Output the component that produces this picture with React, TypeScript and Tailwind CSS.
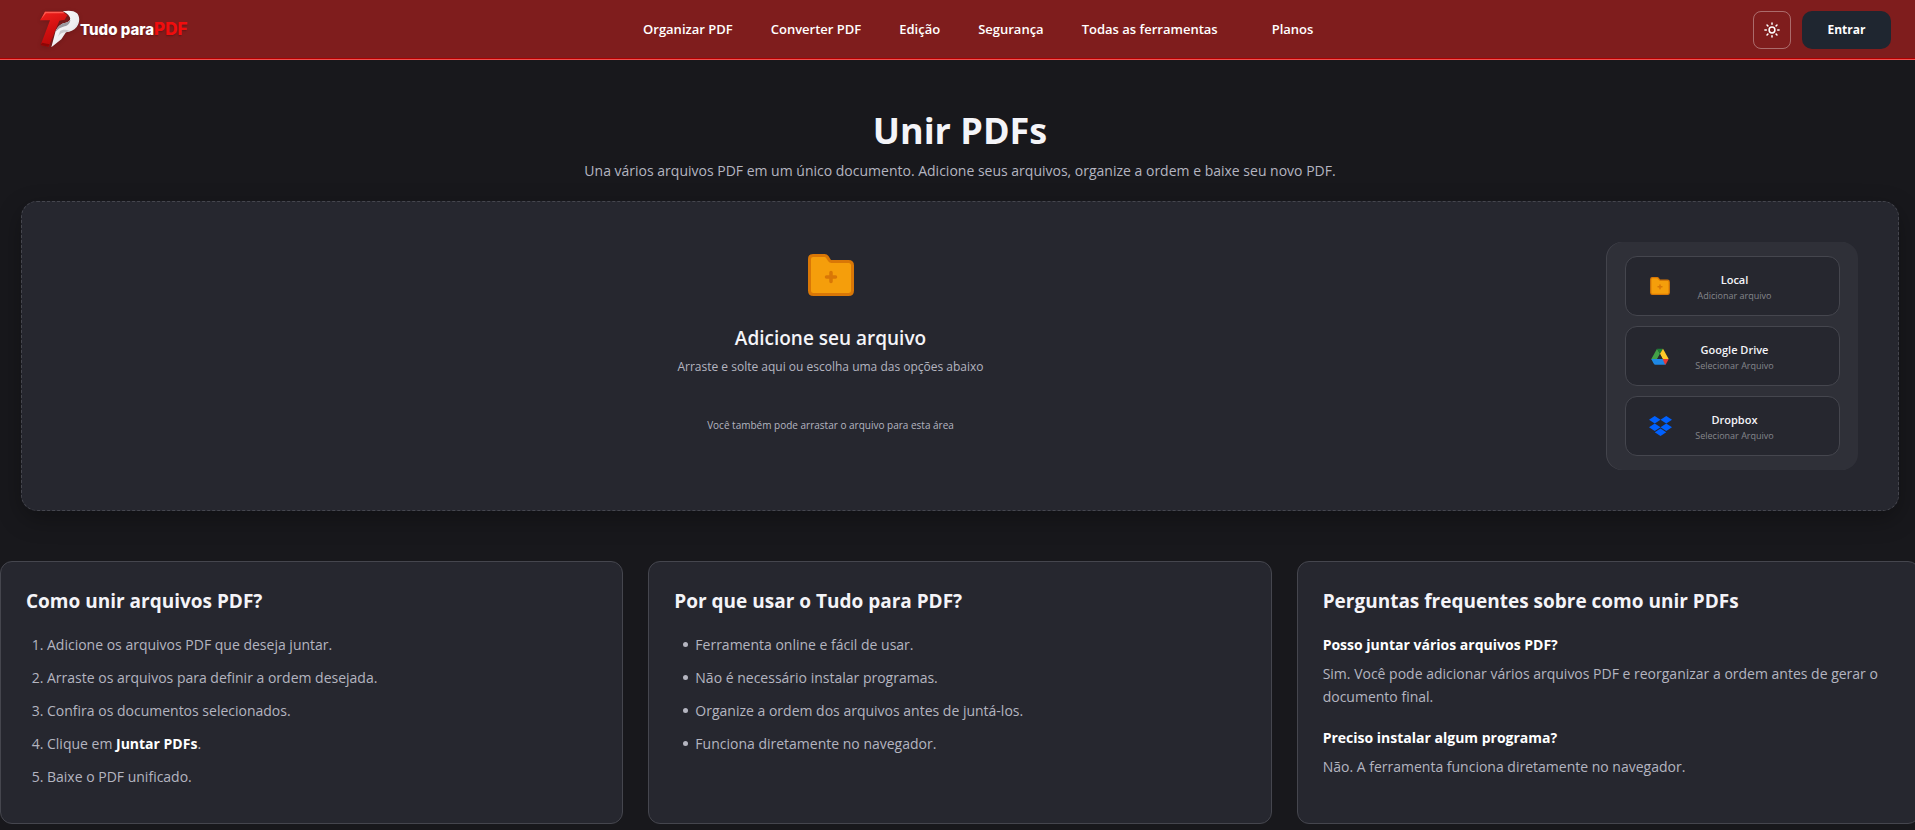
import React from "react";

interface NavItem {
  label: string;
  className?: string;
}

interface SourceOption {
  title: string;
  subtitle: string;
  icon: React.ReactNode;
}

const navItems: NavItem[] = [
  { label: "Organizar PDF" },
  { label: "Converter PDF" },
  { label: "Edição" },
  { label: "Segurança" },
  { label: "Todas as ferramentas" },
  { label: "Planos", className: "ml-4" },
];

const reasons = [
  "Ferramenta online e fácil de usar.",
  "Não é necessário instalar programas.",
  "Organize a ordem dos arquivos antes de juntá-los.",
  "Funciona diretamente no navegador.",
];

const questions = [
  {
    question: "Posso juntar vários arquivos PDF?",
    answer:
      "Sim. Você pode adicionar vários arquivos PDF e reorganizar a ordem antes de gerar o documento final.",
  },
  {
    question: "Preciso instalar algum programa?",
    answer: "Não. A ferramenta funciona diretamente no navegador.",
  },
];

function LogoMark() {
  return (
    <svg className="h-[39px] w-[42px] drop-shadow-sm" viewBox="122 28 126 117" aria-hidden="true">
      <defs>
        <linearGradient id="logoRed" x1="0" y1="0" x2="0.3" y2="1">
          <stop offset="0" stopColor="#f0201c" />
          <stop offset="0.6" stopColor="#cf0f0f" />
          <stop offset="1" stopColor="#b80a0a" />
        </linearGradient>
        <linearGradient id="logoWhite" x1="0" y1="0" x2="1" y2="1">
          <stop offset="0" stopColor="#ffffff" />
          <stop offset="0.6" stopColor="#ededef" />
          <stop offset="1" stopColor="#bdbdc1" />
        </linearGradient>
      </defs>
      <path d="M137 33H190L204 44L196 57L180 60L148 138L124 133L152 59H122Z" fill="url(#logoRed)" />
      <path d="M137 33H190L196 38H140L126 55Z" fill="#ff5a4f" />
      <path d="M124 133L147 138L150 131L128 126Z" fill="#8d0606" />
      <path
        d="M190 32C206 29 224 29 233 38C243 49 241 68 232 79C224 89 212 93 200 95L186 116L156 140L168 94C174 77 184 69 199 66C211 63 215 56 211 49C207 41 198 36 190 32Z"
        fill="url(#logoWhite)"
      />
      <path d="M168 94C174 77 184 69 199 66C206 64 211 61 213 57C213 67 206 74 196 77C184 80 176 85 168 94Z" fill="#9a9aa0" />
      <path d="M200 95C190 95 182 98 176 108L182 92C188 86 200 86 212 91Z" fill="#c9c9cd" />
    </svg>
  );
}

function FolderIcon({ className }: { className: string }) {
  return (
    <svg className={className} viewBox="0 0 46 42" aria-hidden="true">
      <path
        d="M5 1.5H16.5C17.8 1.5 18.7 2 19.4 3.1L21.5 6.5C22 7.3 22.5 7.5 23.5 7.5H40.5C43 7.5 44.5 9.2 44.5 11.5V36.5C44.5 39 43 40.5 40.5 40.5H5.5C3 40.5 1.5 39 1.5 36.5V5C1.5 2.8 2.8 1.5 5 1.5Z"
        fill="#f59e0b"
        stroke="#d97706"
        strokeWidth="3"
      />
      <path d="M23 18.5V27.5M18.5 23H27.5" stroke="#d97706" strokeWidth="3.5" strokeLinecap="round" />
    </svg>
  );
}

function DriveIcon() {
  return (
    <svg className="h-[17px] w-[18px]" viewBox="0 0 54 51" aria-hidden="true">
      <path d="M18 2L27 17L10 48L1 33Z" fill="#43a047" />
      <path d="M18 2H36L27 17Z" fill="#1b7f37" />
      <path d="M36 2L53 33H35L27 17Z" fill="#ffc928" />
      <path d="M1 33H37L45 48Q44 50 41 50H13Q10 50 9 48Z" fill="#1e88e5" />
      <path d="M35 33H53L45 48L42 50Z" fill="#e53935" />
      <path d="M27 19L19 33H35Z" fill="#26272e" />
    </svg>
  );
}

function DropboxIcon() {
  return (
    <svg className="h-5 w-[23px]" viewBox="0 0 46 40" fill="#0061ff" aria-hidden="true">
      <path d="M11.5 0L23 7.5L11.5 15L0 7.5Z" />
      <path d="M34.5 0L46 7.5L34.5 15L23 7.5Z" />
      <path d="M11.5 15L23 22.5L11.5 30L0 22.5Z" />
      <path d="M34.5 15L46 22.5L34.5 30L23 22.5Z" />
      <path d="M23 25L34.5 32.5L23 40L11.5 32.5Z" />
    </svg>
  );
}

function SunIcon() {
  return (
    <svg
      className="h-4 w-4"
      viewBox="0 0 16 16"
      fill="none"
      stroke="currentColor"
      strokeWidth="1.5"
      strokeLinecap="round"
      aria-hidden="true"
    >
      <circle cx="8" cy="8" r="2.9" />
      <path d="M8 0.9V2.3M8 13.7V15.1M0.9 8H2.3M13.7 8H15.1M3 3L3.9 3.9M12.1 12.1L13 13M3 13L3.9 12.1M12.1 3.9L13 3" />
    </svg>
  );
}

const sources: SourceOption[] = [
  { title: "Local", subtitle: "Adicionar arquivo", icon: <FolderIcon className="h-[18px] w-5" /> },
  { title: "Google Drive", subtitle: "Selecionar Arquivo", icon: <DriveIcon /> },
  { title: "Dropbox", subtitle: "Selecionar Arquivo", icon: <DropboxIcon /> },
];

function Header() {
  return (
    <header className="flex h-[60px] items-center border-b border-[#f05252] bg-[#7f1d1d] pr-6 pl-10 shadow-[inset_0_-1px_0_#b00000]">
      <a href="#" className="flex items-center font-['Inter',sans-serif] font-extrabold">
        <LogoMark />
        <span className="-ml-0.5 flex items-baseline leading-6 text-shadow-sm">
          <span className="text-[15px] text-white">Tudo para</span>
          <span className="text-[17px] text-[#f00d0d]">PDF</span>
        </span>
      </a>

      <nav className="flex flex-1 items-center justify-center gap-[38px] pb-0.5 pl-4">
        {navItems.map((item) => (
          <a
            key={item.label}
            href="#"
            className={`text-[13px] leading-5 font-semibold text-white ${item.className ?? ""}`}
          >
            {item.label}
          </a>
        ))}
      </nav>

      <div className="flex items-center gap-[11px]">
        <button
          type="button"
          aria-label="Alternar tema"
          className="flex h-[38px] w-[38px] items-center justify-center rounded-lg border border-white/35 text-white"
        >
          <SunIcon />
        </button>
        <button
          type="button"
          className="h-[38px] w-[89px] rounded-[10px] bg-[#1f2630] text-xs font-bold text-white"
        >
          Entrar
        </button>
      </div>
    </header>
  );
}

function DropArea() {
  return (
    <section className="mx-[21px] mt-[18px] flex gap-2 rounded-2xl border border-dashed border-[#45464e] bg-[#26272f] p-10 shadow-[0_8px_24px_rgba(0,0,0,0.3)]">
      <div className="flex flex-1 flex-col items-center pt-3 text-center">
        <FolderIcon className="h-[42px] w-[46px]" />
        <h2 className="mt-7 text-[19px] leading-7 font-semibold text-[#f4f4f8]">Adicione seu arquivo</h2>
        <p className="mt-[5px] text-xs leading-5 text-[#b4b5c0]">
          Arraste e solte aqui ou escolha uma das opções abaixo
        </p>
        <p className="mt-10 text-[10px] leading-4 text-[#b4b5c0]">
          Você também pode arrastar o arquivo para esta área
        </p>
      </div>

      {/* Origem do arquivo */}
      <div className="flex w-[251px] flex-col gap-2.5 rounded-2xl bg-[#2f3038] px-[18px] py-3.5 shadow-[-1px_0_0_#43444c]">
        {sources.map((source) => (
          <button
            key={source.title}
            type="button"
            className="flex h-[60px] items-center rounded-xl border border-[#45464e] bg-[#26272f] pr-11 pl-5"
          >
            <span className="flex w-7 justify-center">{source.icon}</span>
            <span className="flex flex-1 flex-col pt-1 leading-4">
              <span className="text-[11px] font-semibold text-[#f4f4f8]">{source.title}</span>
              <span className="text-[9px] text-[#85868c]">{source.subtitle}</span>
            </span>
          </button>
        ))}
      </div>
    </section>
  );
}

function InfoCard({ title, children }: { title: string; children: React.ReactNode }) {
  return (
    <article className="rounded-xl border border-[#45464e] bg-[#26272f] p-[25px]">
      <h2 className="mb-[18px] text-[19px] leading-7 font-bold text-[#f4f4f8]">{title}</h2>
      {children}
    </article>
  );
}

export default function App() {
  return (
    <div className="min-h-screen overflow-x-hidden bg-[#18181c] font-['Open_Sans','Noto_Sans',sans-serif]">
      <Header />

      <main className="-mr-[5px]">
        <div className="pt-[47px] text-center">
          <h1 className="text-4xl leading-12 font-bold text-[#f4f4f8]">Unir PDFs</h1>
          <p className="mt-1 text-sm leading-6 text-[#b4b5c0]">
            Una vários arquivos PDF em um único documento. Adicione seus arquivos, organize a ordem e baixe seu novo
            PDF.
          </p>
        </div>

        <DropArea />

        <section className="mt-[50px] grid grid-cols-3 gap-[25px] text-sm leading-[23px] text-[#b4b5c0]">
          <InfoCard title="Como unir arquivos PDF?">
            <ol className="list-decimal pl-[21px]">
              <li className="mb-2.5">Adicione os arquivos PDF que deseja juntar.</li>
              <li className="mb-2.5">Arraste os arquivos para definir a ordem desejada.</li>
              <li className="mb-2.5">Confira os documentos selecionados.</li>
              <li className="mb-2.5">
                Clique em <strong className="font-bold text-white">Juntar PDFs</strong>.
              </li>
              <li className="mb-2.5">Baixe o PDF unificado.</li>
            </ol>
          </InfoCard>

          <InfoCard title="Por que usar o Tudo para PDF?">
            <ul className="pl-[9px]">
              {reasons.map((reason) => (
                <li
                  key={reason}
                  className="mb-2.5 flex items-center gap-[7px] before:size-[5px] before:rounded-full before:bg-[#b4b5c0]"
                >
                  {reason}
                </li>
              ))}
            </ul>
          </InfoCard>

          <InfoCard title="Perguntas frequentes sobre como unir PDFs">
            {questions.map((item) => (
              <div key={item.question} className="mb-[18px]">
                <h3 className="font-bold text-white">{item.question}</h3>
                <p className="mt-1.5">{item.answer}</p>
              </div>
            ))}
          </InfoCard>
        </section>
      </main>
    </div>
  );
}
